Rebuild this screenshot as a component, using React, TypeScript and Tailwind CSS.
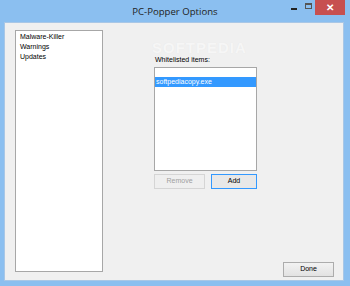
import React from "react";

const font = { fontFamily: '"Liberation Sans", Arial, sans-serif' };

export default function App() {
  return (
    <div className="w-[350px] h-[286px] bg-[#8bbff0] flex flex-col overflow-hidden" style={font}>
      {/* Title bar */}
      <div className="h-[22px] flex items-start relative shrink-0">
        <div className="flex-1 h-[22px] flex items-center justify-center pt-[1px]">
          <span className="text-[#222] leading-none" style={{ fontFamily: '"Open Sans", "Liberation Sans", sans-serif', fontSize: "9.6px" }}>
            PC-Popper Options
          </span>
        </div>
        <div className="absolute right-[5px] top-0 flex items-start">
          <div className="w-[14px] h-[14px] flex items-center justify-center">
            <div className="w-[6px] h-[2px] bg-[#222] mt-[4px]" />
          </div>
          <div className="w-[14px] h-[14px] flex items-center justify-center">
            <div className="w-[7px] h-[6px] border border-[#555] border-t-2 -mt-[2px]" />
          </div>
          <div className="w-[30px] h-[15px] bg-[#c75050] flex items-center justify-center">
            <span className="text-white text-[10px] font-bold leading-none">✕</span>
          </div>
        </div>
      </div>

      {/* Client area */}
      <div className="ml-[4px] mr-[6px] h-[259px] bg-[#f0f0f0] border border-[#a9c7e6] flex pl-[10px] pr-[9px] pt-[7px] pb-[3px] relative">
        {/* Left list */}
        <div className="w-[88px] h-[242px] bg-white border border-[#a7a7a7] self-start pt-[1px] pl-[4px] text-[7px] leading-[10px] text-black">
          <div>Malware-Killer</div>
          <div>Warnings</div>
          <div>Updates</div>
        </div>

        {/* Right side */}
        <div className="flex-1 flex flex-col">
          <div className="ml-[51px] w-[103px] mt-[25px] flex flex-col relative">
            <div className="absolute -top-[15px] -left-[2px] text-[15px] font-bold tracking-[1px] text-[#f6f6f6] leading-none pointer-events-none" style={{ textShadow: "0 0 1px #e6e6e6" }}>
              SOFTPEDIA
            </div>
            <div className="text-[7px] leading-[9px] text-black pl-[1px] relative">Whitelisted items:</div>
            <div className="mt-[3px] h-[104px] bg-white border border-[#a7a7a7] pt-[9px] text-[7px]">
              <div className="h-[10px] bg-[#3399ff] text-white leading-[10px] pl-[1px]">softpediacopy.exe</div>
            </div>
            <div className="mt-[3px] flex gap-[6px]">
              <div className="w-[51px] h-[15px] border border-[#d5d5d5] bg-[#efefef] text-[#a0a0a0] text-[7px] flex items-center justify-center">
                Remove
              </div>
              <div className="w-[46px] h-[15px] border border-[#3399ff] bg-[#e8e8e8] text-black text-[7px] flex items-center justify-center">
                Add
              </div>
            </div>
          </div>
          <div className="mt-auto self-end w-[51px] h-[15px] border border-[#acacac] bg-gradient-to-b from-[#f2f2f2] to-[#e2e2e2] text-black text-[7px] flex items-center justify-center">
            Done
          </div>
        </div>
      </div>
    </div>
  );
}
